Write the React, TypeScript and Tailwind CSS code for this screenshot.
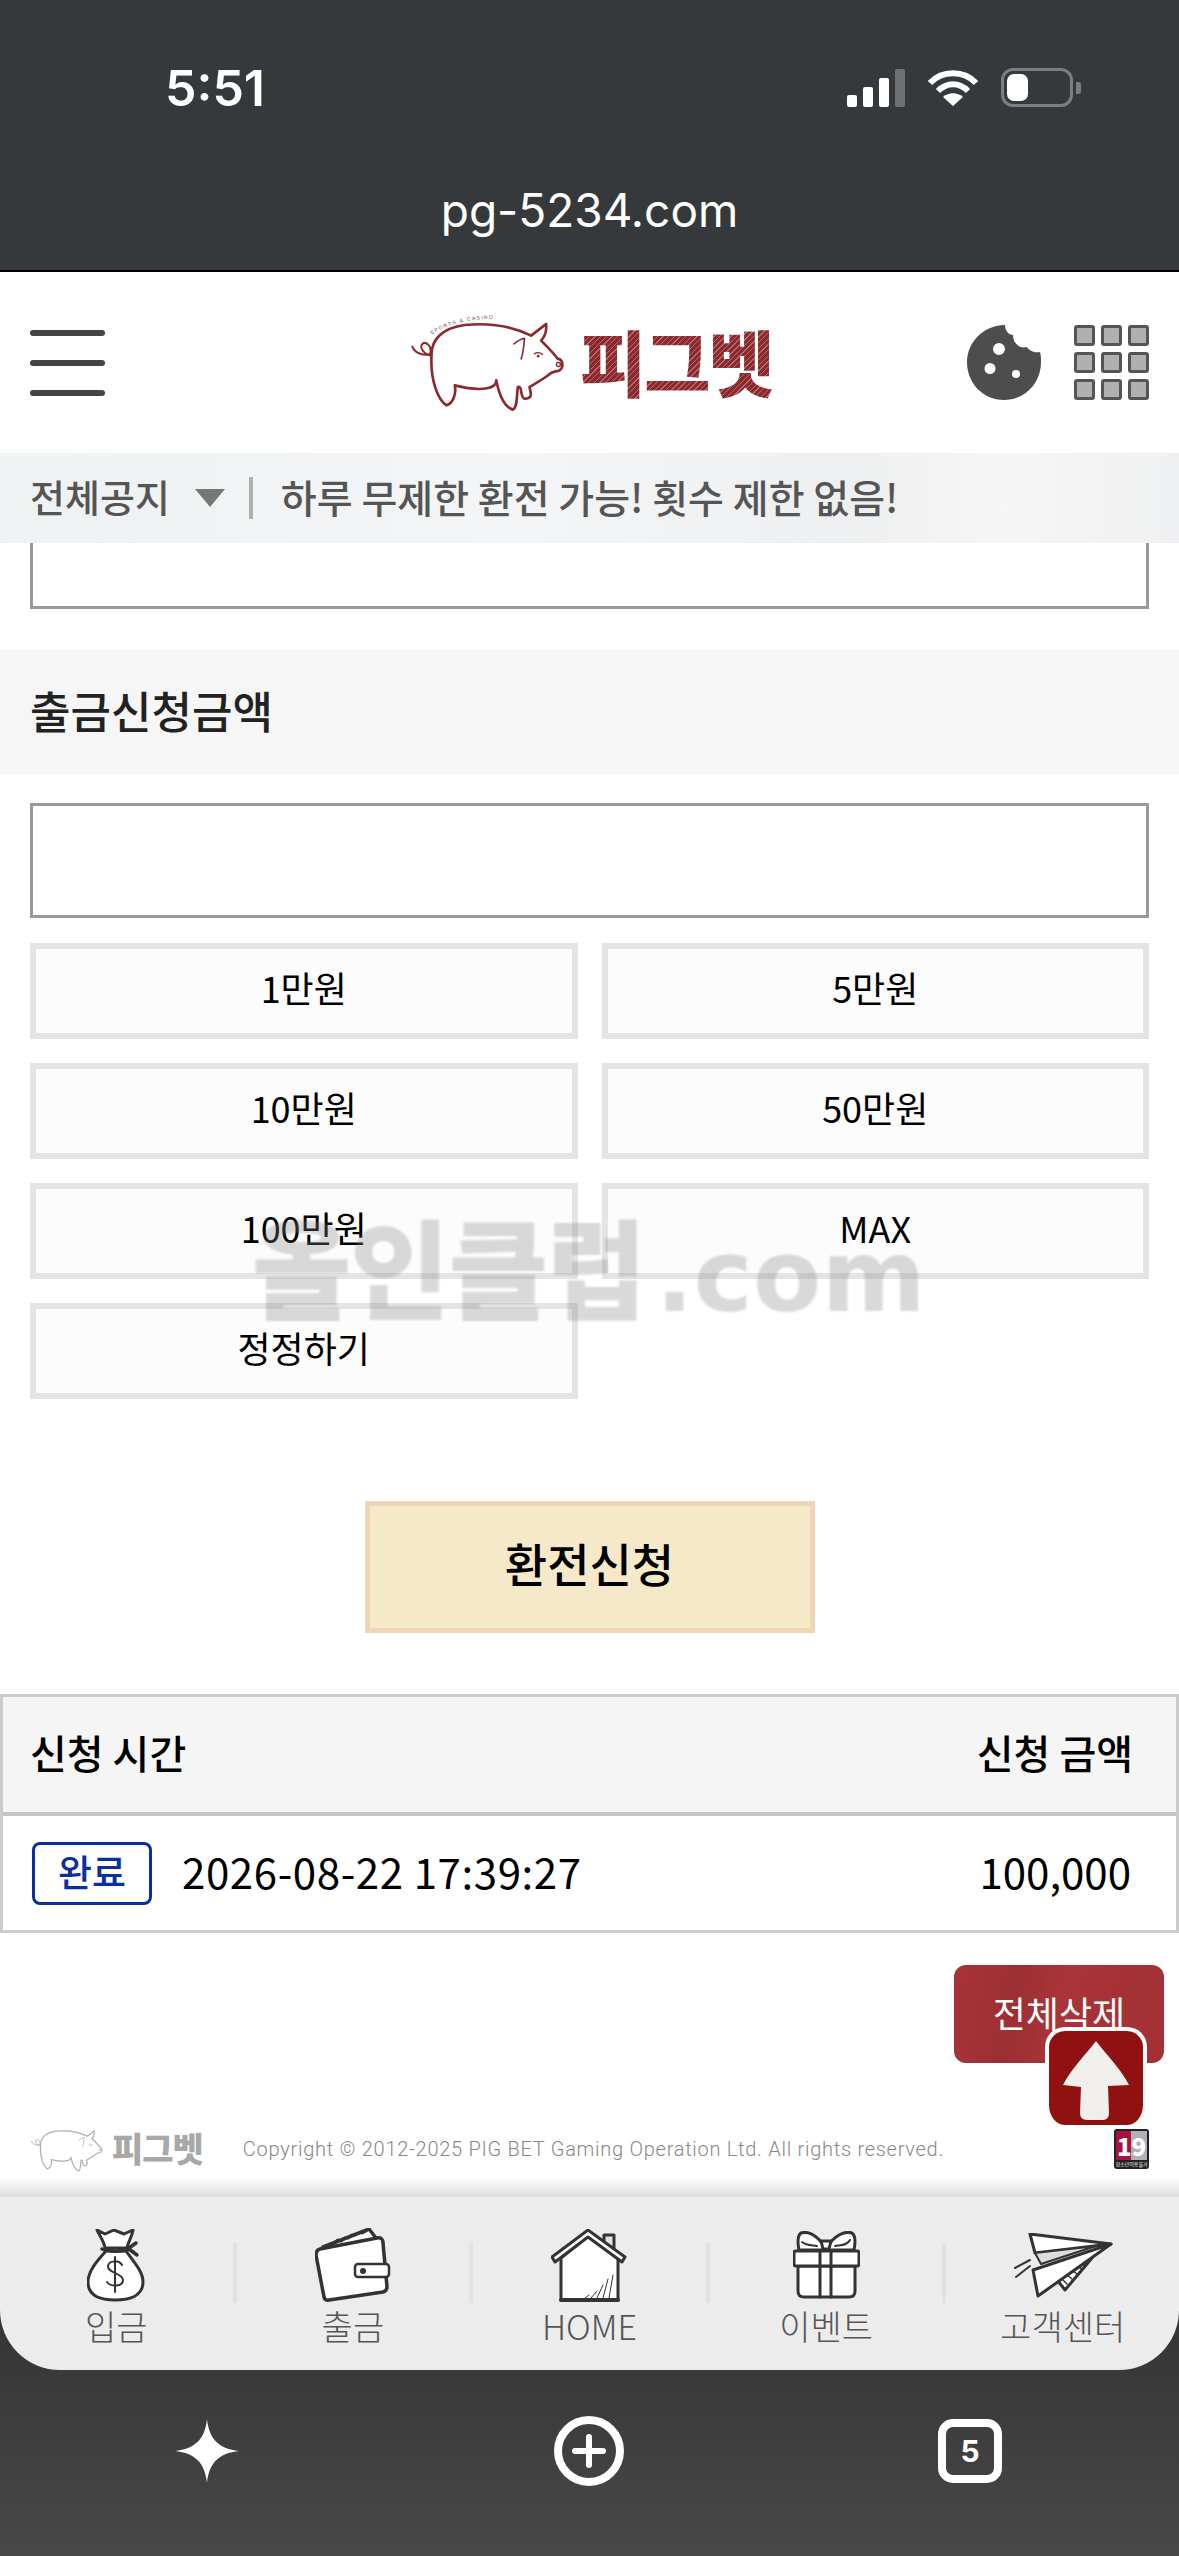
const AMOUNTS = ["1만원", "5만원", "10만원", "50만원", "100만원", "MAX", "정정하기"];

function PigIcon({ color, label = true, className }: { color: string; label?: boolean; className?: string }) {
  return (
    <svg viewBox="85 70 470 295" className={className} fill="none" stroke={color} strokeWidth="8" strokeLinecap="round" strokeLinejoin="round">
      <path d="M92 168C100 190 130 196 146 190C152 170 135 150 122 160C112 172 130 195 150 195" strokeWidth="6" />
      <path d="M150 190C150 150 180 112 250 103C330 95 400 110 450 135L495 100C497 120 490 140 480 150C500 170 520 190 530 205C545 205 550 230 535 240C520 245 515 240 500 255C480 270 460 280 445 290C450 310 455 325 430 325C415 320 425 285 410 290C405 320 410 350 395 358C370 350 355 320 345 270C345 295 300 305 220 285C225 310 215 340 195 345C170 330 145 270 150 190Z" />
      <path d="M398 160C410 150 420 145 430 143C428 170 425 190 420 205" strokeWidth="5" />
      <path d="M460 190C468 184 478 186 484 192" strokeWidth="4" />
      <circle cx="471" cy="197" r="4" fill={color} stroke="none" />
      <circle cx="532" cy="222" r="6" strokeWidth="4" />
      {label && <path id="pig-arc" d="M150 132C200 98 280 80 372 84" stroke="none" />}
      {label && (
        <text fill={color} stroke="none" fontSize="15" letterSpacing="4" fontFamily="Liberation Sans, sans-serif">
          <textPath href="#pig-arc">SPORTS &amp; CASINO</textPath>
        </text>
      )}
    </svg>
  );
}

function MoneyBagIcon() {
  return (
    <svg viewBox="0 0 58 73" className="h-[73px] w-[58px]" fill="#fff" stroke="#333" strokeWidth="3" strokeLinecap="round" strokeLinejoin="round">
      <path d="M19 22C10 32 1 42 1 53C1 66 12 71 28 71C44 71 56 66 56 53C56 42 46 32 39 22Z" />
      <path d="M18 19C17 12 12 6 10 1L18 5L27 1L37 5L46 1C45 8 41 13 40 19Z" />
      <path d="M15 20C22 23 34 23 42 20M42 19L49 14M42 20L50 26" fill="none" strokeWidth="3.5" />
      <path d="M35 36C32 31 22 31 21 37C20 44 36 44 36 51C36 58 24 58 20 53M28 28V63" fill="none" strokeWidth="2" />
    </svg>
  );
}

function WalletIcon() {
  return (
    <svg viewBox="0 0 76 74" className="h-[74px] w-[76px]" fill="#fff" stroke="#333" strokeWidth="3.5" strokeLinecap="round" strokeLinejoin="round">
      <path d="M8 19L54 1L61 10" fill="#fff" />
      <path d="M18 16L23 12M26 13L30 10M33 10L37 7M40 7L44 5M47 5L51 3" fill="none" strokeWidth="3" />
      <path d="M5 21L62 10Q68 9 68 15L72 59Q72 63 68 64L14 72Q10 73 9 69L1 27Q1 22 5 21Z" />
      <rect x="40" y="36" width="34" height="13" rx="3" strokeWidth="2.5" />
      <circle cx="48" cy="43" r="3" fill="#333" stroke="none" />
    </svg>
  );
}

function HouseIcon() {
  return (
    <svg viewBox="0 0 76 73" className="h-[73px] w-[76px]" fill="#fff" stroke="#333" strokeWidth="3" strokeLinecap="round" strokeLinejoin="round">
      <path d="M53 18V6H63V26" fill="#e3e3e3" />
      <path d="M10 29V71H67V29L37 7Z" />
      <path d="M1 28L37 1L74 28L71 33L37 8L4 33Z" />
      <path d="M34 69L38 66M40 69L46 62M46 69L52 56M52 69L57 50M58 69L62 46" fill="none" strokeWidth="1" />
      <path d="M10 71H67" strokeWidth="4" />
    </svg>
  );
}

function GiftIcon() {
  return (
    <svg viewBox="0 0 67 68" className="h-[68px] w-[67px]" fill="#fff" stroke="#333" strokeWidth="3" strokeLinecap="round" strokeLinejoin="round">
      <path d="M29 12C22 3 14 0 8 2C4 5 5 14 6 19H61C62 14 63 5 59 2C53 0 44 3 37 12" />
      <path d="M9 11C14 15 20 14 24 15M57 9C54 15 47 14 42 15" fill="none" strokeWidth="2" />
      <path d="M28 10H38L36 18H30Z" />
      <path d="M5 35H62V60Q62 66 56 66H11Q5 66 5 60Z" />
      <rect x="1" y="20" width="65" height="15" rx="2" />
      <path d="M27 20V66M38 20V66" fill="none" />
    </svg>
  );
}

function PlaneIcon() {
  return (
    <svg viewBox="0 0 100 65" className="h-[65px] w-[100px]" fill="#fff" stroke="#333" strokeWidth="3" strokeLinecap="round" strokeLinejoin="round">
      <path d="M45 48L52 57L79 25Z" />
      <path d="M50 47L54 51M54 42L59 46M59 37L64 41M64 33L69 36" fill="none" strokeWidth="1.5" />
      <path d="M17 1L98 11L22 20Z" />
      <path d="M22 20L83 13L28 31Z" fill="#ddd" strokeWidth="2" />
      <path d="M98 11L20 37L25 63Z" />
      <path d="M17 27L2 35M17 33L3 44" fill="none" strokeWidth="2" />
    </svg>
  );
}

const NAV_ITEMS = [
  { label: "입금", icon: <MoneyBagIcon /> },
  { label: "출금", icon: <WalletIcon /> },
  { label: "HOME", icon: <HouseIcon /> },
  { label: "이벤트", icon: <GiftIcon /> },
  { label: "고객센터", icon: <PlaneIcon /> },
];

export default function App() {
  return (
    <div className="relative flex h-[2556px] w-[1179px] flex-col overflow-hidden bg-white font-['Noto_Sans_CJK_KR',sans-serif] text-black">
      {/* Browser top */}
      <div className="h-[272px] shrink-0 border-b-2 border-black bg-[#36393b] text-white">
        <div className="flex h-[182px] items-start justify-between pl-[165px] pr-[98px] pt-[62px]">
          <span className="font-['Inter',sans-serif] text-[50px] font-semibold leading-[52px]">5:51</span>
          <div className="flex items-center gap-[22px] pt-[6px]">
            <div className="flex h-[38px] items-end gap-[6px]">
              <div className="h-[12px] w-[10px] rounded-[2px] bg-white" />
              <div className="h-[20px] w-[10px] rounded-[2px] bg-white" />
              <div className="h-[29px] w-[10px] rounded-[2px] bg-white" />
              <div className="h-[38px] w-[10px] rounded-[2px] bg-[#6e7173]" />
            </div>
            <svg viewBox="0 0 52 38" className="h-[38px] w-[52px]" fill="none" stroke="#fff" strokeWidth="6">
              <path d="M3 14C15 1 37 1 49 14" />
              <path d="M11 22C20 13 32 13 41 22" />
              <path d="M26 37L16 28C22 23 30 23 36 28Z" fill="#fff" stroke="none" />
            </svg>
            <div className="flex items-center gap-[3px]">
              <div className="h-[39px] w-[72px] rounded-[12px] border-[3px] border-[#7b7e80] p-[3px]">
                <div className="h-full w-[21px] rounded-[7px] bg-white" />
              </div>
              <div className="h-[12px] w-[5px] rounded-r-[3px] bg-[#7b7e80]" />
            </div>
          </div>
        </div>
        <div className="text-center font-['Inter',sans-serif] text-[46px] leading-[56px]">pg-5234.com</div>
      </div>

      {/* Site header */}
      <header className="flex h-[181px] shrink-0 items-center px-[30px]">
        <div className="flex w-[75px] flex-col gap-[24px]">
          <div className="h-[6px] rounded-full bg-[#444]" />
          <div className="h-[6px] rounded-full bg-[#444]" />
          <div className="h-[6px] rounded-full bg-[#444]" />
        </div>
        <div className="ml-[305px] flex items-center gap-[14px]">
          <PigIcon color="#8a2a2e" className="h-[98px] w-[156px]" />
          <span className="bg-[repeating-linear-gradient(135deg,#8a2a2e_0_3px,#b56a6c_3px_4px)] bg-clip-text pb-[6px] text-[72px] font-black leading-[72px] tracking-[-2px] text-transparent">
            피그벳
          </span>
        </div>
        <div className="ml-auto flex items-center gap-[32px]">
          <svg viewBox="0 0 75 75" className="h-[75px] w-[75px]" fill="#4d4d4d">
            <path
              fillRule="evenodd"
              d="M38 0C38 6 42 10 46 10C46 18 52 24 60 22C62 26 68 28 73 27C74 30 74 34 74 37C74 58 58 75 37 75C16 75 0 58 0 37C0 17 17 0 38 0ZM32 18A6 6 0 1 0 32 30A6 6 0 1 0 32 18ZM23 38A5.5 5.5 0 1 0 23 49A5.5 5.5 0 1 0 23 38ZM49 45A4 4 0 1 0 49 53A4 4 0 1 0 49 45Z"
            />
          </svg>
          <div className="grid grid-cols-3 gap-[6px]">
            {Array.from({ length: 9 }).map((_, i) => (
              <div key={i} className="h-[21px] w-[21px] rounded-[3px] border-[3px] border-[#555] bg-[#b0b0b0]" />
            ))}
          </div>
        </div>
      </header>

      {/* Notice bar */}
      <div className="flex h-[90px] shrink-0 items-center bg-[linear-gradient(90deg,#eef2f3,#f4f5f6_45%,#eeeff0_72%,#f6f6f6_85%,#eff0f1)] pl-[30px] text-[#555]">
        <span className="pb-[4px] text-[38px] font-medium leading-none">전체공지</span>
        <svg viewBox="0 0 30 18" className="ml-[25px] h-[18px] w-[30px]" fill="#777">
          <path d="M0 0H30L15 18Z" />
        </svg>
        <div className="ml-[24px] h-[42px] w-[4px] bg-[#b0b0b0]" />
        <span className="ml-[28px] pb-[4px] text-[39px] font-medium leading-none">하루 무제한 환전 가능! 횟수 제한 없음!</span>
      </div>

      {/* Account field, scrolled under the notice bar */}
      <div className="mx-[30px] h-[66px] shrink-0 border-x-[3px] border-b-[3px] border-[#999]" />

      <div className="mt-[41px] flex h-[124px] shrink-0 items-center bg-[#f6f6f6] px-[30px]">
        <span className="pb-[4px] text-[44px] font-medium leading-none text-[#222]">출금신청금액</span>
      </div>

      <div className="mx-[30px] mt-[29px] h-[115px] shrink-0 border-[3px] border-[#999]" />

      <div className="mt-[25px] grid shrink-0 grid-cols-2 gap-[24px] px-[30px]">
        {AMOUNTS.map((amount) => (
          <div key={amount} className="flex h-[96px] items-center justify-center border-[6px] border-[#e4e4e4] bg-[#fcfcfc] pb-[8px] text-[36px] leading-none">
            {amount}
          </div>
        ))}
      </div>

      <div className="mx-auto mt-[102px] flex h-[132px] w-[450px] shrink-0 items-center justify-center border-[5px] border-[#eed5b5] bg-[#f6e9c9] pb-[11px] text-[46px] font-medium leading-none">
        환전신청
      </div>

      {/* Request table */}
      <div className="mt-[61px] shrink-0 border-[3px] border-[#ccc]">
        <div className="flex h-[119px] items-center justify-between border-b-[4px] border-[#c4c4c4] bg-[#f5f5f5] pb-[6px] pl-[27px] pr-[43px] text-[40px] font-medium leading-none">
          <span>신청 시간</span>
          <span>신청 금액</span>
        </div>
        <div className="flex h-[114px] items-center pl-[29px] pr-[45px] text-[42px] leading-none">
          <div className="flex h-[63px] w-[120px] items-center justify-center rounded-[8px] border-[3px] border-[#0a2f9e] pb-[3px] text-[37px] font-medium text-[#0a2f9e]">
            완료
          </div>
          <span className="mb-[5px] ml-[30px] tracking-[0.6px]">2026-08-22 17:39:27</span>
          <span className="mb-[5px] ml-auto">100,000</span>
        </div>
      </div>

      <div className="mr-[15px] mt-[32px] flex h-[98px] w-[210px] shrink-0 items-center justify-center self-end rounded-[12px] bg-[linear-gradient(100deg,#a83338,#9c2f33_30%,#a93439_50%,#a23035)] pb-[4px] text-[36px] leading-none text-white">
        전체삭제
      </div>

      {/* Footer */}
      <div className="mt-[62px] flex h-[52px] shrink-0 items-center px-[30px] pb-[4px]">
        <PigIcon color="#b0b0b0" label={false} className="h-[46px] w-[74px]" />
        <span className="ml-[8px] pb-[3px] text-[34px] font-black leading-none tracking-[-1px] text-[#a8a8a8]">피그벳</span>
        <span className="ml-[40px] font-['Roboto',sans-serif] text-[20px] font-light leading-none tracking-[0.73px] text-[#888]">
          Copyright © 2012-2025 PIG BET Gaming Operation Ltd. All rights reserved.
        </span>
        <div className="ml-auto flex h-[40px] w-[35px] flex-col items-center rounded-[3px] bg-[#222] p-[2px]">
          <div className="flex h-[29px] w-full items-center justify-center bg-[linear-gradient(90deg,#a8123c_50%,#aeb2b8_50%)] text-[24px] font-black leading-none text-white">
            19
          </div>
          <span className="mt-[1px] whitespace-nowrap text-[5px] leading-none text-white">청소년이용불가</span>
        </div>
      </div>
      <div className="h-[20px] shrink-0 bg-[linear-gradient(180deg,#ffffff,#dcdcdc)]" />

      {/* Dark browser chrome behind the nav */}
      <div className="flex min-h-0 flex-1 flex-col bg-[linear-gradient(180deg,#2b2b2b,#484848)]">
        <nav className="flex h-[173px] shrink-0 rounded-b-[60px] bg-[#ececec] px-0 text-[#555]">
          {NAV_ITEMS.map((item, i) => (
            <div key={item.label} className="contents">
              {i > 0 && <div className="mt-[46px] h-[60px] w-[4px] shrink-0 bg-[#e2e2e2]" />}
              <div className="flex flex-1 flex-col items-center pt-[30px]">
                <div className="flex h-[76px] items-center justify-center">{item.icon}</div>
                <span className="mt-[3px] text-[34px] font-light leading-[40px]">{item.label}</span>
              </div>
            </div>
          ))}
        </nav>
        <div className="flex flex-1 items-start pt-[46px]">
          <div className="flex h-[70px] w-[414px] items-center justify-center">
            <svg viewBox="0 0 64 64" className="h-[64px] w-[64px]" fill="#fff">
              <path d="M32 0C34 20 44 30 64 32C44 34 34 44 32 64C30 44 20 34 0 32C20 30 30 20 32 0Z" />
            </svg>
          </div>
          <div className="flex h-[70px] w-[350px] items-center justify-center">
            <div className="flex h-[70px] w-[70px] items-center justify-center rounded-full border-[8px] border-white">
              <svg viewBox="0 0 34 34" className="h-[34px] w-[34px]" fill="none" stroke="#fff" strokeWidth="6" strokeLinecap="round">
                <path d="M17 3V31M3 17H31" />
              </svg>
            </div>
          </div>
          <div className="ml-[174px] mt-[3px] flex h-[64px] w-[64px] items-center justify-center rounded-[15px] border-[8px] border-white font-['Inter',sans-serif] text-[30px] font-bold leading-none text-white">
            5
          </div>
        </div>
      </div>

      {/* Watermark */}
      <div className="pointer-events-none absolute left-[252px] top-[1210px] flex items-baseline font-bold leading-none text-[#808080]/30 blur-[1px]">
        <span className="text-[108px] font-black tracking-[-1px]">올인클럽</span>
        <span className="ml-[10px] font-['DejaVu_Sans',sans-serif] text-[100px]">.com</span>
      </div>

      {/* Back to top */}
      <div className="absolute left-[1045px] top-[2027px] flex h-[98px] w-[102px] items-center justify-center rounded-[20px] border-x-[4px] border-t-[4px] border-x-white border-t-white bg-[#8f1111]">
        <svg viewBox="0 0 66 79" className="mt-[4px] h-[79px] w-[66px]" fill="#f1efec">
          <path d="M33 0C42 12 58 28 66 44L45 45L46 72Q46 79 40 79H24Q17 79 17 72L18 46L0 44C8 28 24 12 33 0Z" />
        </svg>
      </div>
    </div>
  );
}
